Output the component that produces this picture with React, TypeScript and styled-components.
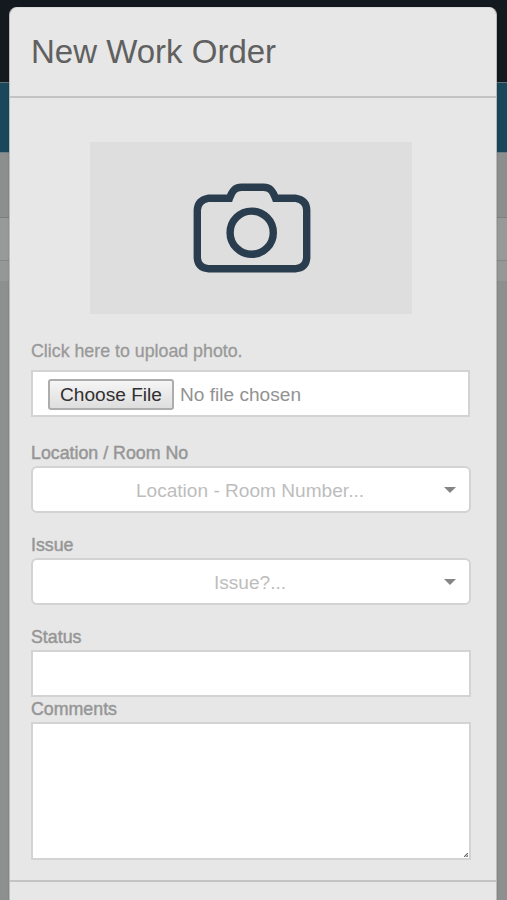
import React from "react";
import styled, { createGlobalStyle } from "styled-components";

const GlobalStyle = createGlobalStyle`
  *, *::before, *::after { box-sizing: border-box; }
  html, body { margin: 0; padding: 0; overflow: hidden; }
  body { font-family: "Liberation Sans", Arial, sans-serif; background: #8d908f; }
`;

const Page = styled.div`
  display: grid;
  grid-template: 900px / 507px;
  overflow: hidden;
  > * { grid-area: 1 / 1; }
`;

const Backdrop = styled.div`
  display: flex;
  flex-direction: column;
`;

const Band = styled.div<{ $height: number; $color: string; $line?: string }>`
  flex: none;
  height: ${(p) => p.$height}px;
  background: ${(p) => p.$color};
  border-bottom: ${(p) => (p.$line ? `1px solid ${p.$line}` : "none")};
`;

const Modal = styled.section`
  display: flex;
  flex-direction: column;
  margin: 7px 10px -20px 9px;
  background: #e7e7e7;
  border: 1px solid #b9bbbb;
  border-top-color: #dadada;
  border-radius: 8px;
  box-shadow: 0 1px 2px rgba(0, 0, 0, 0.2);
`;

const Header = styled.header`
  height: 90px;
  padding: 24px 21px 0;
  border-bottom: 2px solid #c3c3c3;
`;

const Title = styled.h1`
  margin: 0;
  font-size: 33px;
  line-height: 40px;
  font-weight: 400;
  color: #606060;
`;

const Form = styled.form`
  display: flex;
  flex-direction: column;
  height: 784px;
  padding: 44px 25px 0 21px;
  border-bottom: 2px solid #c3c3c3;
`;

const Preview = styled.div`
  display: flex;
  justify-content: center;
  width: 322px;
  height: 172px;
  margin: 0 0 25px 59px;
  padding: 41px 0 0 1px;
  background: #dedede;
`;

const Camera = styled.svg`
  display: block;
  width: 118px;
  height: 90px;
`;

const Label = styled.label<{ $soft?: boolean }>`
  height: 24px;
  font-size: 17.8px;
  line-height: 25px;
  white-space: nowrap;
  color: ${(p) => (p.$soft ? "#999" : "#969696")};
  -webkit-text-stroke: ${(p) => (p.$soft ? 0.3 : 0.45)}px currentColor;
`;

const FileField = styled.div`
  display: flex;
  align-items: center;
  gap: 6px;
  width: 439px;
  height: 47px;
  margin: 7px 0 24px;
  padding: 2px 15px 0;
  background: #fff;
  border: 2px solid #d3d3d3;
  font-size: 19.1px;
  line-height: 23px;
  color: #929292;
`;

const FileButton = styled.button`
  width: 126px;
  height: 31px;
  padding: 0;
  border: 2px solid #adadad;
  border-radius: 3px;
  background: linear-gradient(#f5f5f5, #dedede);
  font: 19.1px/27px "Liberation Sans", Arial, sans-serif;
  color: #303030;
`;

const Select = styled.div`
  display: grid;
  grid-template-columns: 1fr 12px;
  align-items: center;
  width: 440px;
  height: 47px;
  margin: 1px 0 20px;
  padding: 1px 13px 0 23px;
  background: #fff;
  border: 2px solid #d3d3d3;
  border-radius: 6px;
  font-size: 19.1px;
  line-height: 23px;
  color: #bdbdbd;
  text-align: center;
`;

const Caret = styled.span`
  width: 0;
  height: 0;
  border: 6px solid transparent;
  border-top-color: #858585;
  border-bottom-width: 0;
`;

const TextInput = styled.input`
  width: 440px;
  height: 47px;
  margin: 1px 0 0;
  padding: 0 14px;
  background: #fff;
  border: 2px solid #d3d3d3;
  border-radius: 0;
  outline: 0;
  font-size: 19px;
`;

const CommentBox = styled.div`
  display: flex;
  align-items: flex-end;
  justify-content: flex-end;
  width: 440px;
  height: 138px;
  margin-top: 1px;
  padding: 0 1px 1px 0;
  background: #fff;
  border: 2px solid #d3d3d3;
`;

const Grip = styled.svg`
  width: 4px;
  height: 4px;
`;

export default function App() {
  return (
    <>
      <GlobalStyle />
      <Page>
        <Backdrop>
          <Band $height={83} $color="#13191e" $line="#647177" />
          <Band $height={70} $color="#1b475a" $line="#6c8086" />
          <Band $height={65} $color="#8d8e8e" $line="#7d7e7e" />
          <Band $height={43} $color="#989999" $line="#858686" />
          <Band $height={20} $color="#969797" />
          <Band $height={619} $color="#8d908f" />
        </Backdrop>
        <Modal>
          <Header>
            <Title>New Work Order</Title>
          </Header>
          <Form>
            <Preview>
              <Camera viewBox="0 0 118 90" fill="none" stroke="#2a3d4f" strokeWidth="7.4">
                <path d="M15 15.3H36.5C39 8.5 41.5 4.3 48.5 4.3H70.5C77.5 4.3 80 8.5 82.5 15.3H103Q113.5 17 113.7 27V75Q113 84.5 103 85.7H15Q5 84.5 4.3 75V27Q5 17 15 15.3Z" />
                <circle cx="58.7" cy="49.7" r="21.6" />
              </Camera>
            </Preview>
            <Label $soft>Click here to upload photo.</Label>
            <FileField>
              <FileButton type="button">Choose File</FileButton>
              <span>No file chosen</span>
            </FileField>
            <Label>Location / Room No</Label>
            <Select>
              <span>Location - Room Number...</span>
              <Caret />
            </Select>
            <Label>Issue</Label>
            <Select>
              <span>Issue?...</span>
              <Caret />
            </Select>
            <Label htmlFor="status">Status</Label>
            <TextInput id="status" />
            <Label>Comments</Label>
            <CommentBox>
              <Grip viewBox="0 0 4 4" stroke="#666" strokeWidth="1.2">
                <path d="M0 4L4 0M2.5 4L4 2.5" />
              </Grip>
            </CommentBox>
          </Form>
        </Modal>
      </Page>
    </>
  );
}
